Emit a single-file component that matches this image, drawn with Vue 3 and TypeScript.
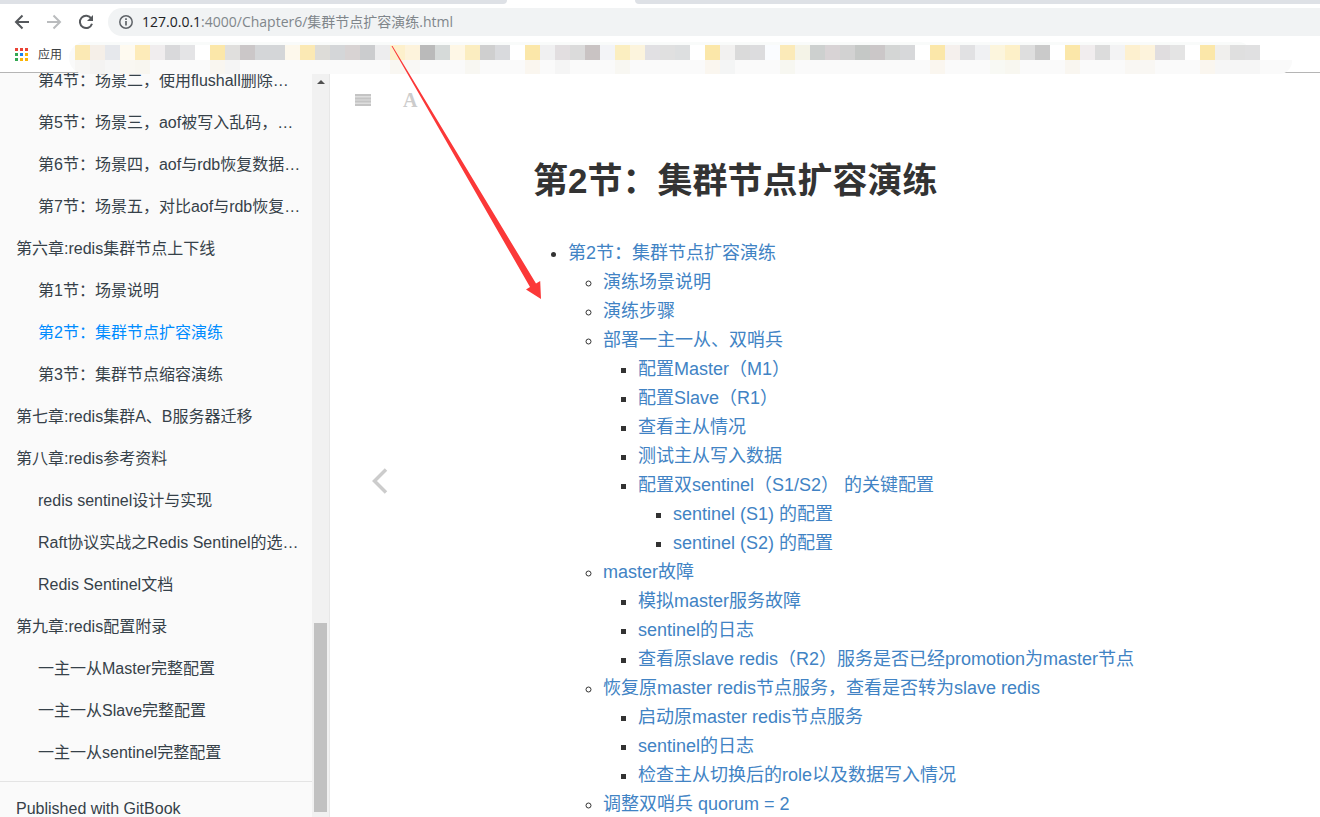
<script setup lang="ts">
interface NavItem {
  text: string
  level: 1 | 2
  active?: boolean
}

interface TocItem {
  text: string
  children?: TocItem[]
}

const nav: NavItem[] = [
  { text: '第4节：场景二，使用flushall删除…', level: 2 },
  { text: '第5节：场景三，aof被写入乱码，…', level: 2 },
  { text: '第6节：场景四，aof与rdb恢复数据…', level: 2 },
  { text: '第7节：场景五，对比aof与rdb恢复…', level: 2 },
  { text: '第六章:redis集群节点上下线', level: 1 },
  { text: '第1节：场景说明', level: 2 },
  { text: '第2节：集群节点扩容演练', level: 2, active: true },
  { text: '第3节：集群节点缩容演练', level: 2 },
  { text: '第七章:redis集群A、B服务器迁移', level: 1 },
  { text: '第八章:redis参考资料', level: 1 },
  { text: 'redis sentinel设计与实现', level: 2 },
  { text: 'Raft协议实战之Redis Sentinel的选…', level: 2 },
  { text: 'Redis Sentinel文档', level: 2 },
  { text: '第九章:redis配置附录', level: 1 },
  { text: '一主一从Master完整配置', level: 2 },
  { text: '一主一从Slave完整配置', level: 2 },
  { text: '一主一从sentinel完整配置', level: 2 },
]

const toc: TocItem[] = [
  { text: '演练场景说明' },
  { text: '演练步骤' },
  {
    text: '部署一主一从、双哨兵',
    children: [
      { text: '配置Master（M1）' },
      { text: '配置Slave（R1）' },
      { text: '查看主从情况' },
      { text: '测试主从写入数据' },
      {
        text: '配置双sentinel（S1/S2） 的关键配置',
        children: [{ text: 'sentinel (S1) 的配置' }, { text: 'sentinel (S2) 的配置' }],
      },
    ],
  },
  {
    text: 'master故障',
    children: [
      { text: '模拟master服务故障' },
      { text: 'sentinel的日志' },
      { text: '查看原slave redis（R2）服务是否已经promotion为master节点' },
    ],
  },
  {
    text: '恢复原master redis节点服务，查看是否转为slave redis',
    children: [
      { text: '启动原master redis节点服务' },
      { text: 'sentinel的日志' },
      { text: '检查主从切换后的role以及数据写入情况' },
    ],
  },
  { text: '调整双哨兵 quorum = 2' },
]

const tiles: string[] = (
  'fbe9b4 f5efe8 e6e8ec fefaf0 fdebb9 f0edee d9d9db e4e4e6 ffffff fbe7a9 e0dfdd cbc7c8 d4d6d8 d4d6d8 fdf8ec fbe9b4 dddcd8 ' +
  'd4d6d8 d8d3d3 cbccce ededee fdf0cc fdf3dc bababa d6dad9 fef7e6 fbedc0 cfcfcf d9dadd ffffff fbe7a9 f0f0f1 e2dee0 dbdbdb ' +
  'c9c3c3 f3f4f7 fbeec0 fcf4dd e1e0e3 e0e0e0 dddfe0 ffffff fbe7a9 f2f1f0 dadada dcdcde fafcff fbeab8 f4f3e7 cdd0cf d8d3d5 ' +
  'd2d2d2 c5c8c6 cbc7c8 d4d6d5 d7d8da ffffff fbe7a9 f5f0ed e1e1e3 f0f1f3 fcf5dd fdf0c8 dedede cacaca ffffff fbe7a9 f1edee ' +
  'dcdcdc f3f3f4 fdf0cf fdf3dc e0dddf e4e4e4 ffffff fbe7a9 f0efed dfdfdf e0e0e1'
).split(' ')

const faint: Record<number, string> = {
  0: 'f7f6f4', 1: 'f4f3f2', 2: 'f6f6f6', 3: 'f9f7f2', 4: 'f8f6f0', 9: 'f9f6f0', 10: 'f5f5f5',
  21: 'f9f7f2', 22: 'f9f8f5', 26: 'f8f7f2', 30: 'faf6ef', 32: 'f5f5f5', 36: 'f8f7f2',
  42: 'faf6ef', 43: 'f4f5f5', 47: 'f7f7f1', 57: 'faf6ef', 61: 'f8f9f4', 62: 'f8f7f0',
  66: 'f9f6f0', 70: 'f9f7f3', 71: 'f9f7f3', 75: 'faf6ef', 76: 'f6f6f6', 77: 'f6f6f6', 78: 'f6f6f6',
}

const appDots = ['#ea4335', '#ea4335', '#ea4335', '#34a853', '#1a82f0', '#fbb405', '#34a853', '#fbb405', '#fbb405']
</script>

<template>
  <div class="window">
    <header class="chrome">
      <div class="tabs"><div class="tab-left"></div><div class="tab-right"></div></div>
      <div class="toolbar">
        <button class="tool" aria-label="Back">
          <svg width="16" height="16" viewBox="0 0 16 16"><path d="M15 8H2.5M8.5 1.5 2 8l6.500 6.500" fill="none" stroke="#55585c" stroke-width="2" /></svg>
        </button>
        <button class="tool" aria-label="Forward">
          <svg width="16" height="16" viewBox="0 0 16 16"><path d="M1 8h12.500M7.500 1.500 14 8l-6.500 6.500" fill="none" stroke="#babcbe" stroke-width="2" /></svg>
        </button>
        <button class="tool" aria-label="Reload">
          <svg width="16" height="16" viewBox="0 0 16 16"><path d="M13.300 4.500A6.200 6.200 0 1 0 14 9.800" fill="none" stroke="#55585c" stroke-width="2" /><path d="M15 1v6H9z" fill="#55585c" /></svg>
        </button>
        <div class="address">
          <svg width="16" height="16" viewBox="0 0 16 16"><circle cx="8" cy="8" r="6.200" fill="none" stroke="#5f6368" stroke-width="1.500" /><path d="M8 7v4.500M8 4.300v1.700" stroke="#5f6368" stroke-width="1.700" /></svg>
          <span class="url"><span class="host">127.0.0.1</span>:4000/Chapter6/集群节点扩容演练.html</span>
        </div>
      </div>
      <div class="bookmarks">
        <button class="apps">
          <svg width="13" height="13" viewBox="0 0 13 13">
            <rect v-for="(c, i) in appDots" :key="i" :x="(i % 3) * 5" :y="Math.floor(i / 3) * 5" width="3" height="3" :fill="c" />
          </svg>
          应用
        </button>
        <div class="mosaic" aria-hidden="true">
          <div class="haze"></div>
          <div class="row">
            <i v-for="(c, i) in tiles" :key="i" :style="{ background: '#' + c }"></i>
          </div>
          <div class="row low">
            <i v-for="(c, i) in tiles" :key="i" :style="{ background: '#' + (faint[i] ?? 'fafafa') }"></i>
          </div>
        </div>
      </div>
    </header>

    <div class="book">
      <aside class="sidebar">
        <nav class="summary">
          <ul>
            <li v-for="item in nav" :key="item.text" :class="{ sub: item.level === 2 }">
              <a href="#" :class="{ active: item.active }">{{ item.text }}</a>
            </li>
          </ul>
          <a class="published" href="#">Published with GitBook</a>
        </nav>
        <div class="scrollbar">
          <svg width="8" height="4" viewBox="0 0 8 4"><path d="M0 4 4 0l4 4z" fill="#505050" /></svg>
          <div class="thumb"></div>
        </div>
      </aside>

      <main class="body">
        <div class="actions">
          <button aria-label="Toggle summary">
            <svg width="16" height="12" viewBox="0 0 16 12"><path d="M0 0h16v12H0z" fill="#dedede" /><path d="M0 1h16M0 4.500h16M0 7.500h16M0 11h16" stroke="#c4c4c4" stroke-width="2" /></svg>
          </button>
          <button class="font" aria-label="Font settings">A</button>
        </div>
        <a class="prev" href="#" aria-label="Previous page">
          <svg width="16" height="26" viewBox="0 0 16 26"><path d="M14 1.500 2.500 13 14 24.500" fill="none" stroke="#ccc" stroke-width="3.500" /></svg>
        </a>
        <article>
          <h1>第2节：集群节点扩容演练</h1>
          <ul class="toc">
            <li>
              <a href="#">第2节：集群节点扩容演练</a>
              <ul>
                <li v-for="a in toc" :key="a.text">
                  <a href="#">{{ a.text }}</a>
                  <ul v-if="a.children">
                    <li v-for="b in a.children" :key="b.text">
                      <a href="#">{{ b.text }}</a>
                      <ul v-if="b.children">
                        <li v-for="c in b.children" :key="c.text"><a href="#">{{ c.text }}</a></li>
                      </ul>
                    </li>
                  </ul>
                </li>
              </ul>
            </li>
          </ul>
        </article>
      </main>
    </div>

    <svg class="pointer" width="152" height="256" viewBox="390 44 152 256" aria-hidden="true">
      <path d="M391.500 46 392.500 46 536 283.500 540.200 281 541 299 526 289.500 530 287z" fill="#fb3838" />
    </svg>
  </div>
</template>

<style>
body {
  margin: 0;
  overflow: hidden;
}
</style>

<style scoped>
.window {
  position: relative;
  display: flex;
  flex-direction: column;
  height: 100vh;
  overflow: hidden;
  background: #fff;
  font-family: "Liberation Sans", "Noto Sans CJK SC", sans-serif;
}
button {
  display: flex;
  align-items: center;
  justify-content: center;
  padding: 0;
  border: 0;
  background: none;
  font: inherit;
}
a {
  text-decoration: none;
}
ul {
  margin: 0;
  padding: 0;
}
.chrome {
  flex: none;
  font-family: "Open Sans", "Noto Sans CJK SC", sans-serif;
}
.tabs {
  display: flex;
  gap: 128px;
  height: 4px;
}
.tab-left {
  width: 507px;
  background: #dee1e6;
  border-bottom-right-radius: 4px;
}
.tab-right {
  flex: 1;
  background: #dee1e6;
  border-bottom-left-radius: 4px;
}
.toolbar {
  display: flex;
  align-items: center;
  gap: 16px;
  padding: 4px 0 4px 14px;
}
.tool {
  width: 16px;
  height: 28px;
}
.address {
  display: flex;
  flex: 1;
  align-items: center;
  gap: 8px;
  height: 28px;
  margin-left: -2px;
  padding-left: 10px;
  background: #f1f3f4;
  border-radius: 14px 0 0 14px;
}
.url {
  padding-bottom: 2px;
  font-size: 14px;
  color: #80868b;
  white-space: nowrap;
}
.host {
  color: #202124;
}
.bookmarks {
  display: flex;
  align-items: flex-start;
  height: 32px;
  border-bottom: 1px solid #b5b5b5;
}
.apps {
  gap: 10px;
  height: 28px;
  padding-left: 15px;
  font-size: 12px;
  color: #3c4043;
}
.mosaic {
  z-index: 1;
  flex: none;
  margin: 2px 0 0 7px;
  overflow: hidden;
  border-radius: 22px 0 18px 22px;
}
.haze {
  height: 3px;
  margin-right: 46px;
  background: #f9fbfa;
  border-top-right-radius: 8px 3px;
}
.row {
  display: flex;
  height: 15px;
  padding-left: 6px;
  background: linear-gradient(to right, #fafafa 6px, #fff 6px);
}
.row i {
  width: 15px;
}
.low {
  height: 14px;
  padding-right: 32px;
  background: #fafafa;
}
.book {
  display: flex;
  flex: 1;
  min-height: 0;
}
.sidebar {
  display: flex;
  flex: none;
  width: 329px;
  overflow: hidden;
  background: #fafafa;
  border-right: 1px solid #e7e7e7;
}
.summary {
  flex: 1;
  min-width: 0;
  margin-top: -13px;
  font-size: 16px;
  line-height: 42px;
  white-space: nowrap;
}
.summary ul {
  padding-bottom: 7px;
  border-bottom: 1px solid #e4e4e4;
  list-style: none;
}
.summary li {
  height: 42px;
  padding-left: 16px;
}
.summary .sub {
  padding-left: 38px;
}
.summary a {
  color: #364149;
}
.summary a.active {
  color: #008cff;
}
.summary .published {
  display: block;
  margin-top: 6px;
  padding-left: 16px;
}
.scrollbar {
  display: flex;
  flex-direction: column;
  justify-content: space-between;
  align-items: center;
  width: 17px;
  padding: 7px 0 5px;
  box-sizing: border-box;
  background: #f1f1f1;
}
.thumb {
  width: 13px;
  height: 189px;
  background: #c1c1c1;
}
.body {
  position: relative;
  flex: 1;
  min-width: 0;
}
.actions {
  display: flex;
  gap: 32px;
  height: 50px;
  padding: 2px 0 0 25px;
}
.actions .font {
  font: bold 20px "Liberation Serif", serif;
  color: #ccc;
}
.prev {
  position: absolute;
  top: 395px;
  left: 42px;
}
article {
  padding: 31px 24px 0 203px;
  color: #333;
}
h1 {
  margin: 0;
  font-size: 35px;
  line-height: 50px;
}
.toc {
  margin-top: 33px;
  font-size: 18px;
  line-height: 29px;
}
.toc,
.toc ul {
  padding-left: 35px;
}
.toc a {
  color: #4183c4;
}
.pointer {
  position: absolute;
  top: 44px;
  left: 390px;
  z-index: 2;
}
</style>
